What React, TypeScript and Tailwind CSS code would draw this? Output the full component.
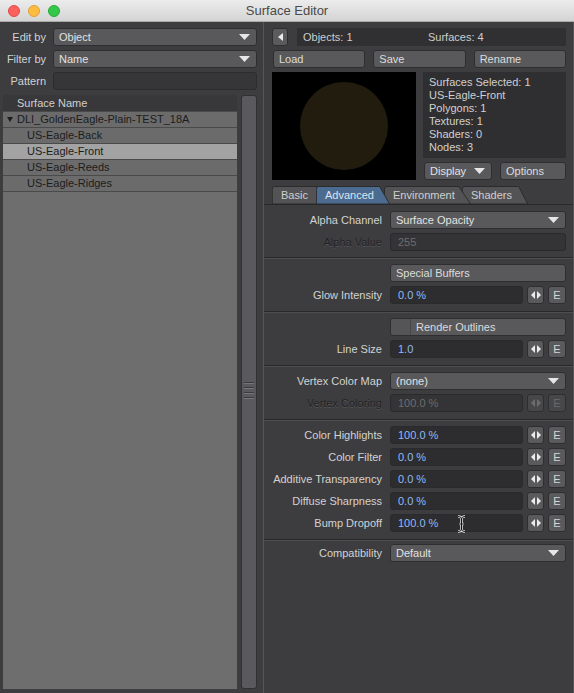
import type { ReactNode } from "react";

const FONT = "font-['Liberation_Sans',Arial,sans-serif]";

function DownTri({ color = "#e6e6e6" }: { color?: string }) {
  return (
    <svg width="11" height="6" viewBox="0 0 11 6" className="shrink-0">
      <path d="M0 0 L11 0 L5.5 6 Z" fill={color} />
    </svg>
  );
}

function Arrows({ color = "#e8e8e8" }: { color?: string }) {
  return (
    <svg width="10" height="8" viewBox="0 0 10 8">
      <path d="M4 0 L4 8 L0 4 Z" fill={color} />
      <path d="M6 0 L6 8 L10 4 Z" fill={color} />
    </svg>
  );
}

function Dropdown({ value, className = "" }: { value: string; className?: string }) {
  return (
    <div
      className={`flex items-center justify-between h-[18px] rounded-[3px] bg-[#59595b] border border-[#2e2e30] pl-[5px] pr-[6px] text-[#e2e2e2] ${className}`}
    >
      <span>{value}</span>
      <DownTri />
    </div>
  );
}

function Button({ children, className = "" }: { children: ReactNode; className?: string }) {
  return (
    <div
      className={`flex items-center h-[18px] rounded-[3px] bg-[#59595b] border border-[#2e2e30] pl-[5px] text-[#dcdcdc] ${className}`}
    >
      {children}
    </div>
  );
}

function Field({ value, dim, cursor }: { value: string; dim?: boolean; cursor?: boolean }) {
  return (
    <div
      className={`relative flex-1 flex items-center h-[18px] rounded-[3px] border border-[#2a2a2c] pl-[7px] ${
        dim ? "bg-[#343436] text-[#6c6c6e]" : "bg-[#2d2d2f] text-[#8fbaf3]"
      }`}
    >
      {value}
      {cursor && (
        <svg width="9" height="18" viewBox="0 0 9 18" className="absolute left-[66px] top-[0px]">
          <path
            d="M1 1.5 Q4.5 1.5 4.5 4 L4.5 14 Q4.5 16.5 1 16.5 M8 1.5 Q4.5 1.5 4.5 4 M4.5 14 Q4.5 16.5 8 16.5 M2.5 9 L6.5 9"
            stroke="#eee"
            strokeWidth="2.4"
            fill="none"
          />
          <path
            d="M1 1.5 Q4.5 1.5 4.5 4 L4.5 14 Q4.5 16.5 1 16.5 M8 1.5 Q4.5 1.5 4.5 4 M4.5 14 Q4.5 16.5 8 16.5 M2.5 9 L6.5 9"
            stroke="#111"
            strokeWidth="1"
            fill="none"
          />
        </svg>
      )}
    </div>
  );
}

function EnvButtons({ dim }: { dim?: boolean }) {
  const bg = dim ? "bg-[#47474a] text-[#6a6a6c]" : "bg-[#5a5a5c] text-[#d6d6d6]";
  return (
    <>
      <div className={`w-[17px] h-[18px] rounded-[3px] border border-[#2e2e30] flex items-center justify-center ${bg}`}>
        <Arrows color={dim ? "#6c6c6e" : "#ececec"} />
      </div>
      <div className={`w-[18px] h-[18px] rounded-[3px] border border-[#2e2e30] flex items-center justify-center ${bg}`}>
        E
      </div>
    </>
  );
}

function Row({ label, dim, children }: { label: string; dim?: boolean; children: ReactNode }) {
  return (
    <div className="flex items-center h-[18px]">
      <div
        className={`w-[118px] text-right whitespace-nowrap ${
          dim ? "text-[#232325] [text-shadow:0_1px_0_rgba(255,255,255,0.12)]" : "text-[#d2d2d2]"
        }`}
      >
        {label}
      </div>
      <div className="ml-[8px] flex-1 flex gap-[4px]">{children}</div>
    </div>
  );
}

function Separator() {
  return (
    <div>
      <div className="h-px bg-[#29292b]" />
      <div className="h-px bg-[#4e4e50]" />
    </div>
  );
}

function Section({ children, pt = "pt-[5px]", pb = "pb-[7px]" }: { children: ReactNode; pt?: string; pb?: string }) {
  return <div className={`flex flex-col gap-[4px] pr-[7px] ${pt} ${pb}`}>{children}</div>;
}

const tabs = [
  { label: "Basic", w: "w-[53px]", ml: "ml-0", z: "z-[4]" },
  { label: "Advanced", w: "w-[74px]", ml: "-ml-[9px]", z: "z-[10]", active: true },
  { label: "Environment", w: "w-[87px]", ml: "-ml-[6px]", z: "z-[2]" },
  { label: "Shaders", w: "w-[66px]", ml: "-ml-[9px]", z: "z-[1]" },
];

function Tabs() {
  return (
    <div className="flex h-[18px] pl-[8px]">
      {tabs.map((t) => (
        <div key={t.label} className={`relative h-[18px] ${t.w} ${t.ml} ${t.z}`}>
          <svg className="absolute inset-0 w-full h-full" preserveAspectRatio="none" viewBox="0 0 100 18">
            <path
              d="M0.5 18 L0.5 3.5 Q0.5 0.5 3.5 0.5 L86 0.5 L99.5 18 Z"
              fill={t.active ? "#4b6b91" : "#535355"}
              stroke="#2b2b2d"
              strokeWidth="1"
              vectorEffect="non-scaling-stroke"
            />
          </svg>
          <span
            className={`relative pl-[9px] leading-[18px] whitespace-nowrap ${
              t.active ? "text-[#dde4ee]" : "text-[#cfcfcf]"
            }`}
          >
            {t.label}
          </span>
        </div>
      ))}
    </div>
  );
}

const surfaces = ["US-Eagle-Back", "US-Eagle-Front", "US-Eagle-Reeds", "US-Eagle-Ridges"];

function LeftPanel() {
  return (
    <div className="w-[263px] flex flex-col pt-[6px] pl-[3px] pr-[6px] pb-[4px]">
      <div className="grid grid-cols-[43px_1fr] gap-x-[7px] gap-y-[4px] items-center">
        <div className="text-right text-[#d2d2d2] whitespace-nowrap">Edit by</div>
        <Dropdown value="Object" />
        <div className="text-right text-[#d2d2d2] whitespace-nowrap">Filter by</div>
        <Dropdown value="Name" />
        <div className="text-right text-[#d2d2d2] whitespace-nowrap">Pattern</div>
        <div className="h-[18px] rounded-[3px] bg-[#363638] border border-[#2c2c2e]" />
      </div>

      <div className="mt-[5px] flex-1 flex gap-[4px] min-h-0">
        {/* surface list */}
        <div className="flex-1 flex flex-col bg-[#6e6e6e]">
          <div className="h-[16px] bg-[#38383a] pl-[14px] leading-[16px] text-[#d0d0d0]">Surface Name</div>
          <div className="h-[16px] bg-[#6b6b6b] border-t border-[#4a4a4a] flex items-center text-[#1c1c1c]">
            <svg width="6" height="5" viewBox="0 0 6 5" className="ml-[4px] mr-[4px]">
              <path d="M0 0 L6 0 L3 5 Z" fill="#1c1c1c" />
            </svg>
            DLI_GoldenEagle-Plain-TEST_18A
          </div>
          {surfaces.map((s) => (
            <div
              key={s}
              className={`h-[16px] border-t border-[#4a4a4a] pl-[24px] leading-[15px] text-[#1c1c1c] ${
                s === "US-Eagle-Front" ? "bg-[#a3a3a3]" : "bg-[#6b6b6b]"
              }`}
            >
              {s}
            </div>
          ))}
          <div className="border-t border-[#4a4a4a]" />
        </div>
        {/* scrollbar */}
        <div className="w-[16px] rounded-[3px] bg-[#5a5a5e] border border-[#303032] flex flex-col items-center justify-center">
          <div className="flex flex-col gap-[3px] mt-[-4px]">
            {[0, 1, 2, 3].map((i) => (
              <div key={i} className="w-[10px] h-[2px] bg-[#3a3a3c] border-b border-[#77777a]" />
            ))}
          </div>
        </div>
      </div>
    </div>
  );
}

function RightPanel() {
  return (
    <div className="flex-1 flex flex-col border-r border-[#555557]">
      <div className="pl-[8px] pr-[7px] pt-[6px] flex flex-col gap-[4px]">
        <div className="flex gap-[9px] h-[18px]">
          <div className="w-[16px] h-[18px] rounded-[3px] bg-[#5b5b5d] border border-[#2e2e30] flex items-center justify-center">
            <svg width="5" height="8" viewBox="0 0 5 8">
              <path d="M5 0 L5 8 L0 4 Z" fill="#ececec" />
            </svg>
          </div>
          <div className="flex-1 flex items-center bg-[#303032] pl-[6px] text-[#cdcdcd]">
            <span className="w-[125px]">Objects: 1</span>
            <span>Surfaces: 4</span>
          </div>
        </div>
        <div className="grid grid-cols-3 gap-[8px] pl-px">
          <Button>Load</Button>
          <Button>Save</Button>
          <Button>Rename</Button>
        </div>
        <div className="flex gap-[7px]">
          <div className="w-[144px] h-[108px] bg-black flex items-center justify-center">
            <div className="w-[88px] h-[88px] rounded-full bg-[#221c0e]" />
          </div>
          <div className="flex-1 flex flex-col gap-[4px]">
            <div className="h-[86px] bg-[#2f2f31] pl-[6px] pt-[4px] text-[#d0d0d0] leading-[13px]">
              <div>Surfaces Selected: 1</div>
              <div>US-Eagle-Front</div>
              <div>Polygons: 1</div>
              <div>Textures: 1</div>
              <div>Shaders: 0</div>
              <div>Nodes: 3</div>
            </div>
            <div className="flex gap-[8px] pl-px">
              <Dropdown value="Display" className="w-[68px]" />
              <Button className="flex-1">Options</Button>
            </div>
          </div>
        </div>
      </div>

      <div className="mt-[6px] border-b border-[#29292b]">
        <Tabs />
      </div>

      <Section pt="pt-[6px]" pb="pb-[6px]">
        <Row label="Alpha Channel">
          <Dropdown value="Surface Opacity" className="flex-1" />
        </Row>
        <Row label="Alpha Value" dim>
          <Field value="255" dim />
        </Row>
      </Section>
      <Separator />
      <Section>
        <Row label="">
          <Button className="flex-1">Special Buffers</Button>
        </Row>
        <Row label="Glow Intensity">
          <Field value="0.0 %" />
          <EnvButtons />
        </Row>
      </Section>
      <Separator />
      <Section>
        <Row label="">
          <div className="flex-1 flex h-[18px] rounded-[3px] bg-[#59595b] border border-[#2e2e30] text-[#dcdcdc]">
            <div className="w-[20px] border-r border-[#47474a] bg-[#555557] rounded-l-[3px]" />
            <div className="pl-[5px] flex items-center">Render Outlines</div>
          </div>
        </Row>
        <Row label="Line Size">
          <Field value="1.0" />
          <EnvButtons />
        </Row>
      </Section>
      <Separator />
      <Section>
        <Row label="Vertex Color Map">
          <Dropdown value="(none)" className="flex-1" />
        </Row>
        <Row label="Vertex Coloring" dim>
          <Field value="100.0 %" dim />
          <EnvButtons dim />
        </Row>
      </Section>
      <Separator />
      <Section>
        <Row label="Color Highlights">
          <Field value="100.0 %" />
          <EnvButtons />
        </Row>
        <Row label="Color Filter">
          <Field value="0.0 %" />
          <EnvButtons />
        </Row>
        <Row label="Additive Transparency">
          <Field value="0.0 %" />
          <EnvButtons />
        </Row>
        <Row label="Diffuse Sharpness">
          <Field value="0.0 %" />
          <EnvButtons />
        </Row>
        <Row label="Bump Dropoff">
          <Field value="100.0 %" cursor />
          <EnvButtons />
        </Row>
      </Section>
      <Separator />
      <Section pt="pt-[3px]" pb="pb-0">
        <Row label="Compatibility">
          <Dropdown value="Default" className="flex-1" />
        </Row>
      </Section>
    </div>
  );
}

export default function App() {
  return (
    <div className={`w-[574px] h-[693px] flex flex-col bg-[#3d3d3f] text-[11px] overflow-hidden ${FONT}`}>
      {/* title bar */}
      <div className="relative h-[22px] shrink-0 bg-gradient-to-b from-[#ececec] to-[#d4d4d4] border-b border-[#a9a9a9] flex items-center justify-center">
        <div className="absolute left-[8px] top-[5px] flex gap-[8px]">
          <div className="w-[12px] h-[12px] rounded-full bg-[#fc605c] border border-[#de4a46]" />
          <div className="w-[12px] h-[12px] rounded-full bg-[#fdbc40] border border-[#dea236]" />
          <div className="w-[12px] h-[12px] rounded-full bg-[#34c84a] border border-[#27aa35]" />
        </div>
        <span className="text-[13px] text-[#4a4a4a]">Surface Editor</span>
      </div>
      <div className="flex-1 flex min-h-0">
        <LeftPanel />
        <div className="w-px bg-[#565658]" />
        <RightPanel />
      </div>
    </div>
  );
}
